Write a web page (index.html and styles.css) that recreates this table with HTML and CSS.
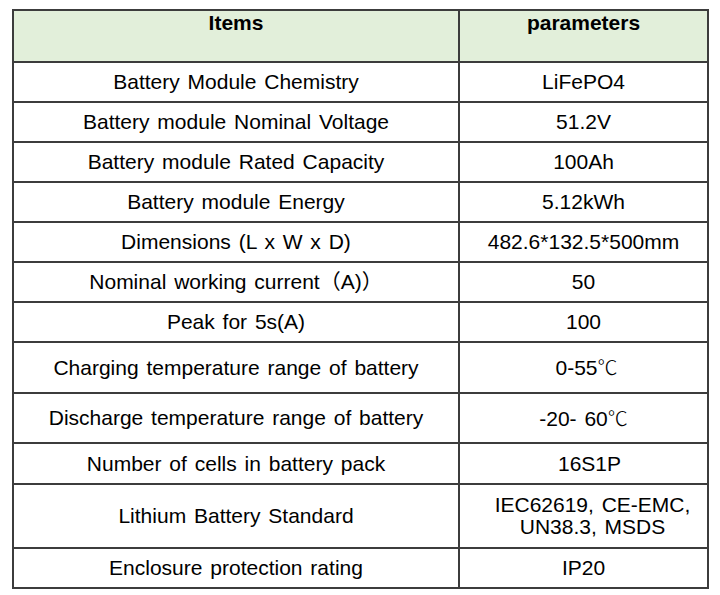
FILE: index.html
```html
<!DOCTYPE html>
<html>
<head>
<meta charset="utf-8">
<link rel="stylesheet" href="styles.css">
</head>
<body>
<table class="spec">
  <tr class="head">
    <th class="col-item">Items</th>
    <th class="col-param">parameters</th>
  </tr>
  <tr class="r40"><td>Battery Module Chemistry</td><td>LiFePO4</td></tr>
  <tr class="r40"><td>Battery module Nominal Voltage</td><td>51.2V</td></tr>
  <tr class="r40"><td>Battery module Rated Capacity</td><td>100Ah</td></tr>
  <tr class="r40"><td>Battery module Energy</td><td>5.12kWh</td></tr>
  <tr class="r40"><td>Dimensions (L x W x D)</td><td>482.6*132.5*500mm</td></tr>
  <tr class="r40"><td>Nominal working current（A)）</td><td>50</td></tr>
  <tr class="r40"><td>Peak for 5s(A)</td><td>100</td></tr>
  <tr class="r51"><td>Charging temperature range of battery</td><td class="shift-s">0-55<span class="deg">℃</span></td></tr>
  <tr class="r50"><td>Discharge temperature range of battery</td><td>-20- 60<span class="deg">℃</span></td></tr>
  <tr class="r41"><td>Number of cells in battery pack</td><td class="shift-m">16S1P</td></tr>
  <tr class="r64"><td>Lithium Battery Standard</td><td class="shift-l">IEC62619, CE-EMC,<br>UN38.3, MSDS</td></tr>
  <tr class="r40"><td>Enclosure protection rating</td><td>IP20</td></tr>
</table>
</body>
</html>
```
FILE: styles.css
```css
html, body {
  margin: 0;
  padding: 0;
  background: #ffffff;
}
body {
  padding: 9px 0 0 12px;
}
.spec {
  border-collapse: collapse;
  width: 695px;
  table-layout: fixed;
  font-family: "Liberation Sans", Arial, "Noto Sans CJK SC", sans-serif;
  font-size: 21px;
  color: #000;
  word-spacing: 2px;
}
.spec th, .spec td {
  border: 2px solid #3c3c3c;
  text-align: center;
  padding: 0 4px;
  line-height: 22px;
}
.col-item { width: 446px; }
.col-param { width: 249px; }
.head th {
  background: #e2efda;
  font-weight: bold;
  vertical-align: top;
  height: 52px;
  padding-top: 1px;
  box-sizing: border-box;
}
.spec td { vertical-align: middle; }
.r40 td { height: 40px; box-sizing: border-box; }
.r41 td { height: 41px; box-sizing: border-box; }
.r50 td { height: 50px; box-sizing: border-box; }
.r51 td { height: 51px; box-sizing: border-box; }
.r64 td { height: 64px; box-sizing: border-box; }
.spec td.shift-s { padding-left: 10px; }
.spec td.shift-m { padding-left: 16px; }
.spec td.shift-l { padding-left: 22px; }
.deg {
  font-family: "Noto Sans CJK SC", "DejaVu Sans", sans-serif;
  font-weight: 300;
  font-size: 20px;
}
```
